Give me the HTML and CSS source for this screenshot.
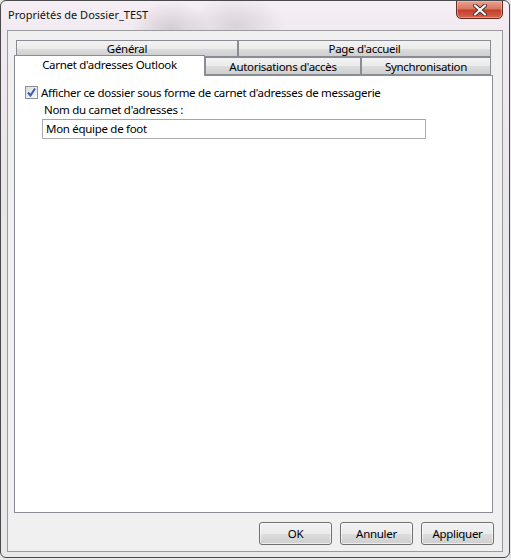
FILE: index.html
```html
<!DOCTYPE html>
<html lang="fr">
<head>
    <meta charset="UTF-8">
    <title>Propriétés de Dossier_TEST</title>
    <link rel="stylesheet" href="styles.css">
</head>
<body>
    <div class="window">
        <div class="titlebar">
            <span class="title">Propriétés de Dossier_TEST</span>
            <button class="close-button" aria-label="Fermer">
                <svg width="14" height="12" viewBox="0 0 14 12">
                    <path d="M2 1.5 L12 10.5 M12 1.5 L2 10.5" stroke="#4a2a28" stroke-width="4" stroke-linecap="round"/>
                    <path d="M2 1.5 L12 10.5 M12 1.5 L2 10.5" stroke="#ffffff" stroke-width="2.2" stroke-linecap="round"/>
                </svg>
            </button>
        </div>

        <div class="client">
            <div class="tabs">
                <div class="tab-row back-row">
                    <div class="tab tab-general">Général</div>
                    <div class="tab tab-accueil">Page d'accueil</div>
                </div>
                <div class="tab-row front-row">
                    <div class="tab tab-carnet selected">Carnet d'adresses Outlook</div>
                    <div class="tab tab-autorisations">Autorisations d'accès</div>
                    <div class="tab tab-synchro">Synchronisation</div>
                </div>
            </div>

            <div class="panel">
                <label class="check-line">
                    <span class="checkbox">
                        <svg width="11" height="11" viewBox="0 0 11 11">
                            <path d="M2 5.5 L4.5 8.5 L9 1.5" fill="none" stroke="#3b5bb5" stroke-width="2"/>
                        </svg>
                    </span>
                    <span>Afficher ce dossier sous forme de carnet d'adresses de messagerie</span>
                </label>
                <div class="field">
                    <div class="field-label">Nom du carnet d'adresses :</div>
                    <div class="text-input">Mon équipe de foot</div>
                </div>
            </div>

            <div class="buttons">
                <button class="dlg-button">OK</button>
                <button class="dlg-button">Annuler</button>
                <button class="dlg-button">Appliquer</button>
            </div>
        </div>
    </div>
</body>
</html>
```

FILE: styles.css
```css
/* Fenêtre Windows 7 */
body {
    margin: 0;
    padding: 0;
    background-color: #e9e7ea;
    font-family: 'Noto Sans', 'Open Sans', sans-serif;
    font-size: 11.5px;
    letter-spacing: -0.3px;
    color: #000;
}

.window {
    width: 508px;
    height: 556px;
    border: 1px solid #4a4a4c;
    border-radius: 6px;
    background:
        radial-gradient(ellipse 40px 30px at 170px 30px, rgba(150, 140, 150, 0.35), transparent),
        radial-gradient(ellipse 50px 30px at 235px 25px, rgba(160, 150, 160, 0.3), transparent),
        linear-gradient(to bottom, #f5eef4 0, #f1ebf1 30px, #e7e6e9 200px, #e9e9ea 100%);
    overflow: hidden;
}

.titlebar {
    height: 29px;
    display: flex;
    align-items: flex-start;
    justify-content: space-between;
}

.title {
    margin: 6px 0 0 7px;
    font-size: 11px;
    letter-spacing: 0;
    color: #111;
}

.close-button {
    width: 47px;
    height: 19px;
    margin: -1px 6px 0 0;
    border: 1px solid #6b2a24;
    border-radius: 0 0 5px 5px;
    background: linear-gradient(to bottom, #e8a493 0, #d9765f 45%, #c2402a 55%, #d5664e 100%);
    box-shadow: inset 0 0 0 1px rgba(255, 200, 190, 0.45);
    display: flex;
    align-items: center;
    justify-content: center;
    padding: 0;
}

.client {
    width: 494px;
    height: 520px;
    margin-left: 6px;
    border: 1px solid #9a9a9e;
    background-color: #f0f0f0;
    display: flex;
    flex-direction: column;
}

/* Onglets */
.tabs {
    margin: 9px 0 0 6px;
    width: 479px;
}

.tab-row {
    display: flex;
}

.back-row {
    height: 17px;
    padding-left: 2px;
}

.front-row {
    height: 18px;
}

.tab {
    box-sizing: border-box;
    border: 1px solid #898c95;
    background: linear-gradient(to bottom, #f3f3f3 0, #ebebeb 50%, #dddddd 51%, #cfcfcf 100%);
    text-align: center;
    line-height: 15px;
    white-space: nowrap;
}

.tab-general { width: 222px; }
.tab-accueil { width: 253px; }
.tab-autorisations { width: 156px; line-height: 17px; }
.tab-synchro { width: 130px; line-height: 17px; }

.tab-carnet {
    width: 191px;
}

.tab.selected {
    height: 21px;
    margin-top: -2px;
    margin-bottom: -1px;
    background: #fff;
    border-bottom: none;
    position: relative;
    z-index: 1;
    line-height: 18px;
}

.panel {
    box-sizing: border-box;
    width: 479px;
    height: 438px;
    margin-left: 6px;
    border: 1px solid #898c95;
    background-color: #fff;
    padding: 10px 0 0 10px;
}

.check-line {
    display: flex;
    align-items: center;
    gap: 3px;
    height: 13px;
}

.checkbox {
    box-sizing: border-box;
    width: 13px;
    height: 13px;
    border: 1px solid #8e8f8f;
    background: linear-gradient(135deg, #dcdcdc, #fbfbfb);
    display: flex;
    align-items: center;
    justify-content: center;
}

.field {
    margin: 2px 0 0 17px;
}

.field-label {
    margin-left: 2px;
    height: 17px;
    line-height: 17px;
}

.text-input {
    box-sizing: border-box;
    width: 384px;
    height: 20px;
    margin-top: 1px;
    border: 1px solid #abadb3;
    border-top-color: #a4a6ad;
    padding-left: 3px;
    line-height: 18px;
}

/* Boutons */
.buttons {
    display: flex;
    justify-content: flex-end;
    gap: 8px;
    margin: 9px 8px 0 0;
}

.dlg-button {
    width: 73px;
    height: 23px;
    border: 1px solid #707070;
    border-radius: 3px;
    background: linear-gradient(to bottom, #f2f2f2 0, #ebebeb 50%, #dddddd 51%, #cfcfcf 100%);
    box-shadow: inset 0 0 0 1px rgba(255, 255, 255, 0.6);
    font-family: 'Noto Sans', 'Open Sans', sans-serif;
    font-size: 11.5px;
    letter-spacing: -0.3px;
    color: #000;
    padding: 0;
}
```
